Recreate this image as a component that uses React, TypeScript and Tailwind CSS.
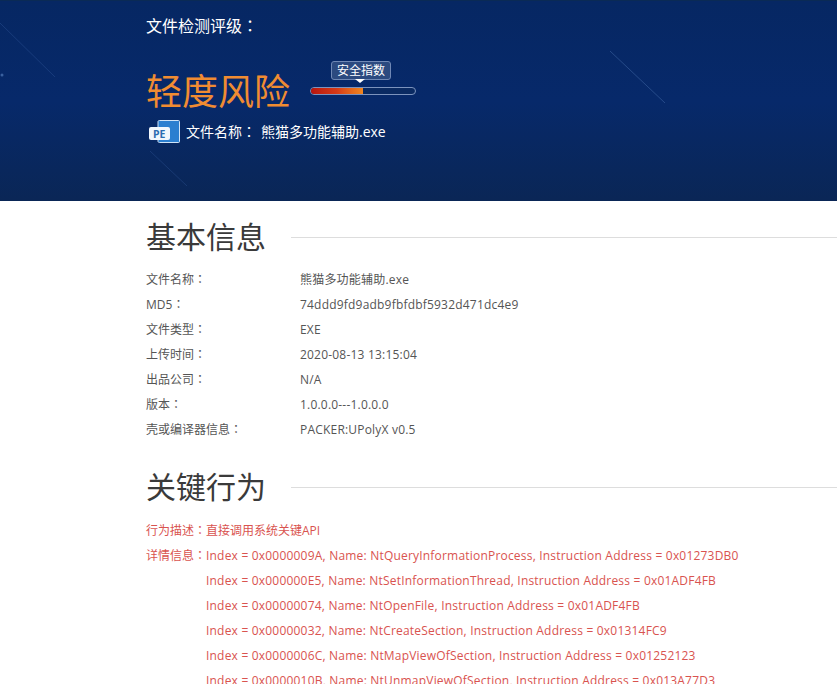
const basicInfo = [
  ['文件名称', '熊猫多功能辅助.exe'],
  ['MD5', '74ddd9fd9adb9fbfdbf5932d471dc4e9'],
  ['文件类型', 'EXE'],
  ['上传时间', '2020-08-13 13:15:04'],
  ['出品公司', 'N/A'],
  ['版本', '1.0.0.0---1.0.0.0'],
  ['壳或编译器信息', 'PACKER:UPolyX v0.5'],
]

const details = [
  'Index = 0x0000009A, Name: NtQueryInformationProcess, Instruction Address = 0x01273DB0',
  'Index = 0x000000E5, Name: NtSetInformationThread, Instruction Address = 0x01ADF4FB',
  'Index = 0x00000074, Name: NtOpenFile, Instruction Address = 0x01ADF4FB',
  'Index = 0x00000032, Name: NtCreateSection, Instruction Address = 0x01314FC9',
  'Index = 0x0000006C, Name: NtMapViewOfSection, Instruction Address = 0x01252123',
  'Index = 0x0000010B, Name: NtUnmapViewOfSection, Instruction Address = 0x013A77D3',
]

// the reference centres its full-width colon, which the TC face does
function Colon() {
  return <span className="font-['Noto_Sans_CJK_TC']">：</span>
}

function SectionTitle({ title }: { title: string }) {
  return (
    <div className="flex items-center h-[40px]">
      <h2 className="w-[145px] text-[30px] leading-[40px] font-normal text-[#3a3a3a] whitespace-nowrap">{title}</h2>
      <div className="flex-1 h-px bg-[#ddd]" />
    </div>
  )
}

function PeIcon() {
  return (
    <svg width="31" height="23" viewBox="0 0 31 23" className="shrink-0">
      <path d="M9 1.5 A1.5 1.5 0 0 1 10.5 0.5 H29.5 A1 1 0 0 1 30.5 1.5 V21.5 A1 1 0 0 1 29.5 22.5 H10.5 A1.5 1.5 0 0 1 9 21.5 Z" fill="#2b7fd0" stroke="#cfe3f7" strokeWidth="1" />
      <rect x="0" y="7" width="21" height="13" rx="2" fill="#f2f7fc" />
      <text x="4" y="17.5" fontSize="10.5" fontWeight="700" fill="#2b6cb0" fontFamily="Open Sans, sans-serif">PE</text>
    </svg>
  )
}

export default function App() {
  return (
    <div className="h-[684px] w-[837px] overflow-hidden bg-white text-xs font-['Open_Sans','Noto_Sans_CJK_SC',sans-serif]">
      <header className="relative h-[201px] overflow-hidden border-t border-[#0a2a55] bg-gradient-to-b from-[#062763] via-[#07296a] to-[#0a2656] pl-[146px] text-white">
        {/* faint light streaks in the banner */}
        <svg className="absolute inset-0" width="837" height="201" fill="none">
          <path d="M0 22 L55 76" stroke="#2f5596" strokeWidth="1" opacity="0.45" />
          <path d="M150 150 L187 185" stroke="#2f5596" strokeWidth="1" opacity="0.4" />
          <path d="M610 50 L665 102" stroke="#3a619f" strokeWidth="1" opacity="0.6" />
          <circle cx="2" cy="74" r="1.5" fill="#3a619f" />
        </svg>
        <div className="relative">
          <p className="pt-[14px] text-base leading-[20px]">文件检测评级<Colon /></p>
          <div className="mt-[25px] flex items-start">
            <p className="w-[164px] pt-[6px] text-[36px] leading-[50px] text-[#f08c32] whitespace-nowrap">轻度风险</p>
            <div className="relative w-[106px] pt-[26px]">
              <div className="absolute left-[21px] top-0 h-[19px] w-[60px] rounded-[3px] border border-[#7088b5] bg-[#2c4a80] text-center text-xs leading-[17px]">
                安全指数
                <span className="absolute left-[23px] top-[17px] h-0 w-0 border-x-[5px] border-t-[4px] border-x-transparent border-t-white" />
              </div>
              <div className="h-[8px] w-[106px] overflow-hidden rounded-full border border-[#7c93bd] bg-[#0a2a62]">
                <div className="h-full w-[52px] bg-gradient-to-r from-[#b8140f] via-[#d63a18] to-[#f0861f]" />
              </div>
            </div>
          </div>
          <div className="mt-[2px] ml-[3px] flex items-center">
            <PeIcon />
            <p className="ml-[6px] text-sm leading-[24px] whitespace-nowrap">
              文件名称<Colon /><span className="ml-[5px]">熊猫多功能辅助.exe</span>
            </p>
          </div>
        </div>
      </header>

      <main className="pl-[146px]">
        <section className="pt-[16px]">
          <SectionTitle title="基本信息" />
          <div className="mt-[10px] text-[#555]">
            {basicInfo.map(([label, value]) => (
              <div key={label} className="flex h-[25px] items-center">
                <span className="w-[154px] shrink-0">{label}<Colon /></span>
                <span className="tracking-[0.2px]">{value}</span>
              </div>
            ))}
          </div>
        </section>

        <section className="pt-[25px]">
          <SectionTitle title="关键行为" />
          <div className="mt-[11px] text-[#d9534f]">
            <div className="flex h-[25px] items-center">
              <span className="w-[60px] shrink-0 whitespace-nowrap">行为描述<Colon /></span>
              <span>直接调用系统关键API</span>
            </div>
            {details.map((line, i) => (
              <div key={line} className="flex h-[25px] items-center">
                <span className="w-[60px] shrink-0 whitespace-nowrap">{i === 0 ? <>详情信息<Colon /></> : ''}</span>
                <span className="whitespace-nowrap tracking-[0.2px]">{line}</span>
              </div>
            ))}
          </div>
        </section>
      </main>
    </div>
  )
}
